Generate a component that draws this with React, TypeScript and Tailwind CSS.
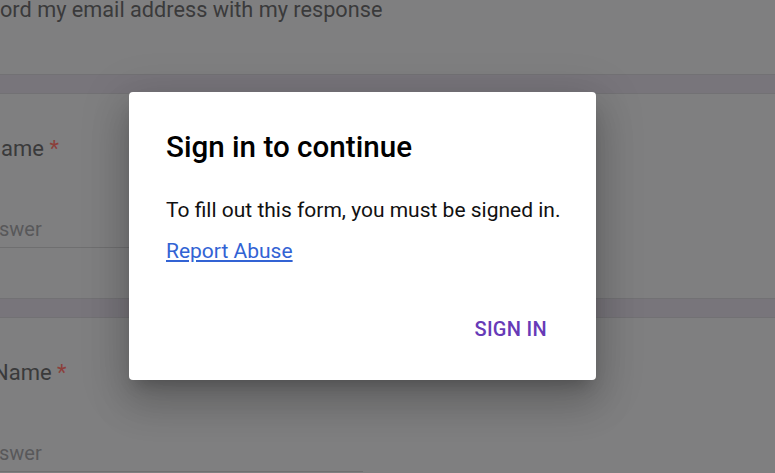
import { ReactNode } from 'react'

const font = { fontFamily: 'Roboto, "Noto Sans", sans-serif' }

function Card({ children, className = '' }: { children: ReactNode; className?: string }) {
  return <div className={`bg-[#7f7f80] ${className}`}>{children}</div>
}

// a gap between two cards of the form
function Strip() {
  return <div className="h-[20px] bg-[#78757b] border-y border-[#727174]" />
}

function Question({ label, shift }: { label: string; shift: string }) {
  return (
    <div className="pt-[40px]">
      <div className={`text-[22px] leading-[30px] text-[#3a3a3b] whitespace-nowrap ${shift}`}>
        {label} <span className="text-[#8c3f3b]">*</span>
      </div>
      <div className="mt-[53px] w-[363px] border-b border-[#6f6f70] pb-[6px]">
        <div className="text-[20px] leading-[24px] text-[#58585a] -ml-[1px]">swer</div>
      </div>
    </div>
  )
}

export default function App() {
  return (
    <div className="relative w-[775px] h-[473px] overflow-hidden bg-[#7f7f80]" style={font}>
      {/* form behind the dimmed overlay */}
      <div className="flex flex-col">
        <Card className="-mt-[2px] h-[76px]">
          <div className="text-[21.7px] leading-[24px] text-[#3a3a3b] whitespace-nowrap">
            ord my email address with my response
          </div>
        </Card>
        <Strip />
        <Card className="h-[204px]">
          <Question label="ame" shift="ml-[1px]" />
        </Card>
        <Strip />
        <Card className="h-[200px]">
          <Question label="Name" shift="-ml-[7px]" />
        </Card>
      </div>

      {/* dialog */}
      <div className="absolute inset-0 flex items-center">
        <div className="ml-[129px] -mt-[1px] w-[467px] bg-white rounded-[4px] pl-[37px] pr-[49px] pt-[37px] pb-[39px] shadow-[0_11px_15px_-7px_rgba(0,0,0,0.2),0_24px_38px_3px_rgba(0,0,0,0.14),0_9px_46px_8px_rgba(0,0,0,0.12)]">
          <h2 className="text-[29.6px] leading-[36px] font-medium text-black whitespace-nowrap">Sign in to continue</h2>
          <p className="mt-[33px] text-[21px] leading-[24px] text-[#111] whitespace-nowrap">
            To fill out this form, you must be signed in.
          </p>
          <a href="#" className="mt-[17px] block w-fit text-[21px] leading-[24px] text-[#3263d4] underline">
            Report Abuse
          </a>
          <div className="mt-[54px] flex justify-end">
            <button className="text-[20px] leading-[24px] font-medium tracking-[0.3px] text-[#673ab7]">SIGN IN</button>
          </div>
        </div>
      </div>
    </div>
  )
}
